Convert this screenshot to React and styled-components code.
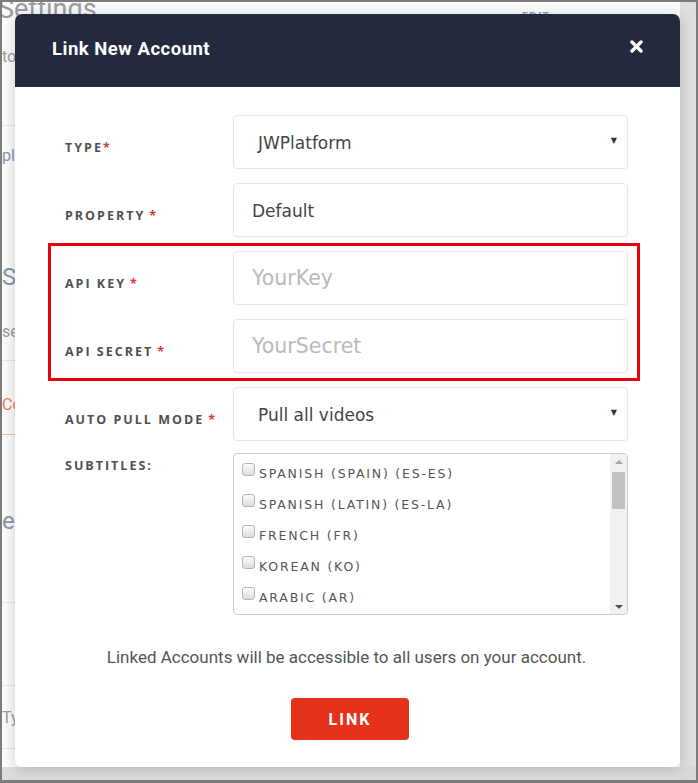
import React from 'react';
import styled, { createGlobalStyle } from 'styled-components';

const subtitles = [
  'SPANISH (SPAIN) (ES-ES)',
  'SPANISH (LATIN) (ES-LA)',
  'FRENCH (FR)',
  'KOREAN (KO)',
  'ARABIC (AR)',
  'GERMAN (DE)',
  'ITALIAN (IT)',
];

const App = () => (
  <>
    <GlobalStyle />
    <Frame>
      <Page>
        <BgRow $h={124}>
          <HeadLine>
            <PageTitle>Settings</PageTitle>
            <EditLink>EDIT</EditLink>
          </HeadLine>
          <BgText $top={22}>tor</BgText>
        </BgRow>
        <BgRow $h={235}>
          <BgText $top={20} $tone="blue">placement</BgText>
          <BgText $top={98} $tone="blue" $big>Seats</BgText>
          <BgText $top={30}>settings</BgText>
        </BgRow>
        <BgRow $h={74} $line="#f4b9aa">
          <BgText $top={34} $tone="orange">Connect</BgText>
        </BgRow>
        <BgRow $h={168}>
          <BgText $top={72} $tone="blue" $big>era</BgText>
        </BgRow>
        <BgRow $h={83} />
        <BgRow $h={63}>
          <BgText $top={22}>Type</BgText>
        </BgRow>
      </Page>
      <SideBar />
      <BottomBar />
      <Corner />

      <Modal>
        <Header>
          <HeaderTitle>Link New Account</HeaderTitle>
          <Close aria-label="close">
            <svg width="13" height="13" viewBox="0 0 13 13">
              <path
                d="M2 2 L11 11 M11 2 L2 11"
                stroke="#fff"
                strokeWidth="3.4"
                strokeLinecap="round"
              />
            </svg>
          </Close>
        </Header>

        <Body>
          <Fields>
            <Field>
              <Label>
                TYPE<Req $tight>*</Req>
              </Label>
              <SelectBox>
                <span>JWPlatform</span>
                <Caret>▼</Caret>
              </SelectBox>
            </Field>

            <Field>
              <Label>
                PROPERTY<Req>*</Req>
              </Label>
              <Input defaultValue="Default" />
            </Field>

            <Highlight>
              <Field>
                <Label>
                  API KEY<Req>*</Req>
                </Label>
                <Input placeholder="YourKey" />
              </Field>
              <Field>
                <Label>
                  API SECRET<Req>*</Req>
                </Label>
                <Input placeholder="YourSecret" />
              </Field>
            </Highlight>

            <Field>
              <Label>
                AUTO PULL MODE<Req>*</Req>
              </Label>
              <SelectBox>
                <span>Pull all videos</span>
                <Caret>▼</Caret>
              </SelectBox>
            </Field>

            <Field $top>
              <Label $top>SUBTITLES:</Label>
              <ListBox>
                <Options>
                  {subtitles.map((s) => (
                    <Option key={s}>
                      <Check />
                      <span>{s}</span>
                    </Option>
                  ))}
                </Options>
                <Scroll>
                  <Arrow $dir="up" />
                  <Thumb />
                  <Track />
                  <Arrow $dir="down" />
                </Scroll>
              </ListBox>
            </Field>
          </Fields>

          <Note>Linked Accounts will be accessible to all users on your account.</Note>
          <LinkButton>LINK</LinkButton>
        </Body>
      </Modal>
    </Frame>
  </>
);

export default App;

const GlobalStyle = createGlobalStyle`
  html, body { margin: 0; padding: 0; background: #fff; }
  body { font-family: "Open Sans", "Liberation Sans", sans-serif; }
  * { box-sizing: border-box; }
`;

const Frame = styled.div`
  position: relative;
  width: 698px;
  height: 783px;
  border: 2px solid #7b7b7b;
  border-bottom-width: 3px;
  display: grid;
  grid-template-columns: 1fr 16px;
  grid-template-rows: 1fr 13px;
  overflow: hidden;
  background: #fafafa;
`;

const Page = styled.div`
  grid-column: 1;
  grid-row: 1;
  overflow: hidden;
  background: #fbfbfb;
`;

const SideBar = styled.div`
  grid-column: 2;
  grid-row: 1;
  background: #dedede;
`;

const BottomBar = styled.div`
  grid-column: 1;
  grid-row: 2;
  background: #dcdcdc;
`;

const Corner = styled.div`
  grid-column: 2;
  grid-row: 2;
  background: #d8d8d8;
`;

const BgRow = styled.div`
  height: ${({ $h }) => $h}px;
  border-bottom: 1px solid ${({ $line }) => $line || '#e6e6e6'};
  display: flex;
  flex-direction: column;
  align-items: flex-start;
`;

const HeadLine = styled.div`
  display: flex;
  align-items: flex-start;
  width: 100%;
  margin-top: -9px;
`;

const PageTitle = styled.div`
  font-family: "Roboto", sans-serif;
  font-size: 27px;
  color: #9b9b9b;
  margin-left: -4px;
`;

const EditLink = styled.div`
  margin-left: auto;
  margin-right: 130px;
  margin-top: 15px;
  font-size: 11px;
  font-weight: 700;
  letter-spacing: 1px;
  color: #7f9fd6;
`;

const toneColors = { blue: '#8795ab', orange: '#ec7b5f' };

const BgText = styled.div`
  margin-top: ${({ $top }) => $top}px;
  font-family: "Roboto", sans-serif;
  font-size: ${({ $big }) => ($big ? 24 : 16)}px;
  line-height: 1.2;
  color: ${({ $tone }) => toneColors[$tone] || '#9a9a9a'};
`;

const Modal = styled.div`
  position: absolute;
  top: 12px;
  left: 13px;
  width: 665px;
  height: 753px;
  background: #fff;
  border-radius: 7px;
  overflow: hidden;
  box-shadow: 0 2px 14px rgba(0, 0, 0, 0.18);
  display: flex;
  flex-direction: column;
`;

const Header = styled.div`
  height: 73px;
  flex-shrink: 0;
  background: #232a3d;
  padding: 0 37px 0 37px;
  display: flex;
  align-items: center;
  justify-content: space-between;
`;

const HeaderTitle = styled.div`
  font-family: "Roboto", sans-serif;
  font-size: 18.5px;
  font-weight: 700;
  letter-spacing: 0.5px;
  color: #fff;
  margin-top: -4px;
`;

const Close = styled.div`
  display: flex;
  margin-top: -8px;
`;

const Body = styled.div`
  padding: 28px 52px 0 50px;
  display: flex;
  flex-direction: column;
`;

const Fields = styled.div`
  display: flex;
  flex-direction: column;
  gap: 14px;
`;

const Field = styled.div`
  display: grid;
  grid-template-columns: 168px 395px;
  align-items: ${({ $top }) => ($top ? 'start' : 'center')};
  margin-top: ${({ $top }) => ($top ? -2 : 0)}px;
`;

const Label = styled.div`
  font-size: 12.5px;
  font-weight: 700;
  letter-spacing: 2px;
  color: #505050;
  padding-top: ${({ $top }) => ($top ? 4 : 10)}px;
`;

const Req = styled.span`
  color: #e53232;
  margin-left: ${({ $tight }) => ($tight ? 0 : 4)}px;
`;

const Highlight = styled.div`
  display: flex;
  flex-direction: column;
  gap: 14px;
  margin: -8px -12px -8px -17px;
  padding: 5px 9px 5px 14px;
  border: 3px solid #e8000c;
`;

const SelectBox = styled.div`
  height: 54px;
  border: 1px solid #e6e6e6;
  border-radius: 4px;
  padding: 2px 10px 0 24px;
  display: flex;
  align-items: center;
  justify-content: space-between;
  font-family: "DejaVu Sans", "Open Sans", sans-serif;
  font-size: 17px;
  color: #444;
  box-shadow: 0 1px 2px rgba(0, 0, 0, 0.03);
`;

const Caret = styled.span`
  font-size: 8px;
  color: #333;
  margin-top: -6px;
`;

const Input = styled.input`
  height: 54px;
  width: 100%;
  border: 1px solid #e6e6e6;
  border-radius: 4px;
  padding: 2px 19px 0 18px;
  font-family: "DejaVu Sans", "Open Sans", sans-serif;
  font-size: 17px;
  color: #444;
  outline: none;
  box-shadow: 0 1px 2px rgba(0, 0, 0, 0.03);

  &::placeholder {
    font-size: 20.5px;
    color: #bababa;
  }
`;

const ListBox = styled.div`
  height: 162px;
  border: 1px solid #cdcdcd;
  border-radius: 4px;
  display: flex;
  overflow: hidden;
`;

const Options = styled.div`
  flex: 1;
  padding: 11px 0 0 8px;
  overflow: hidden;
`;

const Option = styled.div`
  display: flex;
  align-items: flex-start;
  gap: 4px;
  height: 31px;
  font-family: "DejaVu Sans", "Open Sans", sans-serif;
  font-size: 12.5px;
  line-height: 18px;
  letter-spacing: 1.8px;
  color: #555;
  white-space: nowrap;
`;

const Check = styled.span`
  width: 13px;
  height: 13px;
  margin-top: -2px;
  flex-shrink: 0;
  border: 1px solid #b4b4b4;
  border-radius: 3px;
  background: linear-gradient(#fdfdfd, #dcdcdc);
`;

const Scroll = styled.div`
  width: 17px;
  background: #f1f1f1;
  display: flex;
  flex-direction: column;
  align-items: center;
  padding: 6px 0 5px;
`;

const Arrow = styled.span`
  width: 0;
  height: 0;
  border-left: 4px solid transparent;
  border-right: 4px solid transparent;
  ${({ $dir }) =>
    $dir === 'up'
      ? 'border-bottom: 4px solid #a3a3a3;'
      : 'border-top: 4px solid #505050;'}
`;

const Thumb = styled.span`
  width: 13px;
  height: 37px;
  margin-top: 8px;
  background: #c1c1c1;
`;

const Track = styled.span`
  flex: 1;
`;

const Note = styled.div`
  margin-top: 31px;
  font-family: "Roboto", sans-serif;
  font-size: 17px;
  line-height: 22px;
  color: #555;
  text-align: center;
`;

const LinkButton = styled.button`
  align-self: flex-start;
  margin: 30px 0 0 226px;
  width: 118px;
  height: 42px;
  border: none;
  border-radius: 4px;
  background: #e4321b;
  color: #fff;
  font-family: "Roboto", sans-serif;
  font-size: 16px;
  font-weight: 700;
  letter-spacing: 2px;
`;
